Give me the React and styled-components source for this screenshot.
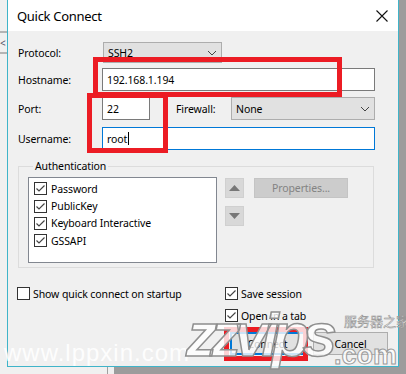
import React from "react";
import styled, { createGlobalStyle } from "styled-components";

const Global = createGlobalStyle`
  html, body { margin: 0; padding: 0; }
  body { width: 406px; height: 374px; overflow: hidden; background: #f0f0f0;
    font-family: "Noto Sans", "Open Sans", sans-serif; }
`;

const Desktop = styled.div`
  position: relative;
  width: 406px;
  height: 374px;
  overflow: hidden;
  background: #f0f0f0;
  display: flex;
  align-items: flex-start;
  padding-left: 7px;
  box-sizing: border-box;
`;

const BackWindow = styled.div`
  position: absolute;
  left: 107px;
  top: 0;
  width: 299px;
  height: 374px;
  border-left: 1px solid #a0a0a0;
  background: #f0f0f0;
  &::after {
    content: "";
    position: absolute;
    left: 6px;
    right: 0;
    top: 0;
    bottom: 0;
    background: #9c9c9c;
  }
`;

const BackLine = styled.div`
  position: absolute;
  left: 0;
  width: 7px;
  height: 2px;
  top: ${(p) => p.top}px;
  background: #b4b4b4;
`;

const BackGlyph = styled.div`
  position: absolute;
  left: 0;
  top: 36px;
  font: 10px "Noto Sans", sans-serif;
  color: #556;
`;

const Dialog = styled.div`
  position: relative;
  z-index: 1;
  margin-top: -1px;
  width: 392px;
  height: 368px;
  box-sizing: border-box;
  border: 1px solid #3fb4c9;
  background: #f0f0f0;
  display: flex;
  flex-direction: column;
  color: #000;
  font-size: 10.5px;
  letter-spacing: -0.1px;
`;

const TitleBar = styled.div`
  height: 31px;
  flex: none;
  background: #fff;
  display: flex;
  align-items: center;
  justify-content: space-between;
  padding: 0 9px 0 9px;
  box-sizing: border-box;
`;

const Title = styled.div`
  font-size: 13px;
  letter-spacing: -0.3px;
`;

const CloseBtn = styled.svg`
  width: 12px;
  height: 12px;
  margin-right: 1px;
`;

const Body = styled.div`
  flex: 1;
  padding: 11px 22px 0 10px;
  display: flex;
  flex-direction: column;
`;

const Row = styled.div`
  display: flex;
  align-items: center;
  height: ${(p) => p.h}px;
  margin-top: ${(p) => p.mt || 0}px;
`;

const Label = styled.div`
  width: ${(p) => p.w}px;
  flex: none;
  margin-left: ${(p) => p.ml || 0}px;
`;

const Select = styled.div`
  width: ${(p) => p.w}px;
  height: 100%;
  box-sizing: border-box;
  border: 1px solid #adadad;
  background: #e1e1e1;
  display: flex;
  align-items: center;
  justify-content: space-between;
  padding: 0 4px 0 4px;
  margin-left: ${(p) => p.ml || 0}px;
`;

const Chevron = () => (
  <svg width="10" height="6" viewBox="0 0 10 6">
    <path d="M1 1 L5 5 L9 1" fill="none" stroke="#444" strokeWidth="1" />
  </svg>
);

const Input = styled.div`
  width: ${(p) => p.w}px;
  height: 100%;
  box-sizing: border-box;
  border: 1px solid ${(p) => (p.focus ? "#0078d7" : "#7a7a7a")};
  background: #fff;
  display: flex;
  align-items: center;
  padding-left: 4px;
`;

const Caret = styled.span`
  display: inline-block;
  width: 1px;
  height: 13px;
  background: #000;
  margin-left: 1px;
`;

const Group = styled.fieldset`
  margin: 9px 0 0 0;
  padding: 4px 0 0 9px;
  width: 356px;
  height: 109px;
  box-sizing: border-box;
  border: 1px solid #dcdcdc;
  display: flex;
  align-items: flex-start;
`;

const Legend = styled.legend`
  padding: 0 2px;
  margin-left: 5px;
  line-height: 14px;
`;

const ListBox = styled.div`
  width: 189px;
  height: 86px;
  box-sizing: border-box;
  border: 1px solid #828790;
  background: #fff;
  padding: 2px 0 0 5px;
  display: flex;
  flex-direction: column;
`;

const ListItem = styled.div`
  height: 17.4px;
  display: flex;
  align-items: center;
  gap: 4px;
`;

const Box = styled.span`
  width: 13px;
  height: 13px;
  flex: none;
  box-sizing: border-box;
  border: 1px solid #333;
  background: #fff;
  display: inline-flex;
`;

const Check = ({ on }) => (
  <Box>
    {on && (
      <svg width="11" height="11" viewBox="0 0 11 11">
        <path d="M1.5 5.5 L4 8 L9.5 2.5" fill="none" stroke="#444" strokeWidth="1.2" />
      </svg>
    )}
  </Box>
);

const ArrowCol = styled.div`
  display: flex;
  flex-direction: column;
  gap: 8px;
  margin-left: 8px;
  margin-top: 1px;
`;

const ArrowBtn = styled.div`
  width: 19px;
  height: 20px;
  box-sizing: border-box;
  background: #d8d8d8;
  border: 1px solid #d0d0d0;
  display: flex;
  align-items: center;
  justify-content: center;
`;

const PropBtn = styled.div`
  margin-left: 10px;
  margin-top: 1px;
  width: 94px;
  height: 20px;
  box-sizing: border-box;
  background: #cccccc;
  border: 1px solid #c4c4c4;
  color: #838383;
  display: flex;
  align-items: center;
  justify-content: center;
`;

const Bottom = styled.div`
  display: grid;
  grid-template-columns: 208px auto;
  margin-top: 19px;
  row-gap: 9px;
  margin-left: -1px;
`;

const CheckRow = styled.div`
  display: flex;
  align-items: center;
  gap: 3px;
  height: 13px;
  grid-column: ${(p) => p.col};
`;

const Buttons = styled.div`
  display: flex;
  gap: 8px;
  justify-content: flex-end;
  margin-top: 10px;
  margin-right: -12px;
`;

const Btn = styled.div`
  width: 75px;
  height: 23px;
  box-sizing: border-box;
  background: #e1e1e1;
  border: ${(p) => (p.primary ? "2px solid #0078d7" : "1px solid #adadad")};
  display: flex;
  align-items: center;
  justify-content: center;
`;

const RedBox = styled.div`
  position: absolute;
  z-index: 3;
  left: ${(p) => p.x}px;
  top: ${(p) => p.y}px;
  width: ${(p) => p.w}px;
  height: ${(p) => p.h}px;
  box-sizing: border-box;
  border: 5px solid #ec1c24;
  pointer-events: none;
`;

const WaterText = styled.div`
  position: absolute;
  z-index: 4;
  left: ${(p) => p.x}px;
  top: ${(p) => p.y}px;
  white-space: nowrap;
  font-family: ${(p) => p.ff || '"Liberation Sans", sans-serif'};
  font-size: ${(p) => p.fs}px;
  font-weight: ${(p) => p.fw || 400};
  font-style: ${(p) => p.fi || "normal"};
  letter-spacing: ${(p) => p.ls || 0}px;
  color: rgba(255, 255, 255, ${(p) => p.op || 0.85});
  -webkit-text-stroke: ${(p) => p.stroke || "0"};
  line-height: 1;
  pointer-events: none;
`;

export default function App() {
  return (
    <>
      <Global />
      <Desktop>
        <BackWindow />
        <BackLine top={31} />
        <BackLine top={52} />
        <BackGlyph>&lt;</BackGlyph>
        <Dialog>
          <TitleBar>
            <Title>Quick Connect</Title>
            <CloseBtn viewBox="0 0 12 12">
              <path d="M0.5 0.5 L11.5 11.5 M11.5 0.5 L0.5 11.5" stroke="#111" strokeWidth="1.1" />
            </CloseBtn>
          </TitleBar>
          <Body>
            <Row h={21}>
              <Label w={84}>Protocol:</Label>
              <Select w={119} ml={1}>
                <span>SSH2</span>
                <Chevron />
              </Select>
            </Row>
            <Row h={23} mt={5}>
              <Label w={84}>Hostname:</Label>
              <Input w={273}>192.168.1.194</Input>
            </Row>
            <Row h={23} mt={6}>
              <Label w={84}>Port:</Label>
              <Input w={48}>22</Input>
              <Label w={55} ml={26}>Firewall:</Label>
              <Select w={144}>
                <span>None</span>
                <Chevron />
              </Select>
            </Row>
            <Row h={23} mt={7}>
              <Label w={84}>Username:</Label>
              <Input w={273} focus>
                root<Caret />
              </Input>
            </Row>
            <Group>
              <Legend>Authentication</Legend>
              <ListBox>
                {["Password", "PublicKey", "Keyboard Interactive", "GSSAPI"].map((t) => (
                  <ListItem key={t}>
                    <Check on />
                    <span>{t}</span>
                  </ListItem>
                ))}
              </ListBox>
              <ArrowCol>
                <ArrowBtn>
                  <svg width="11" height="6" viewBox="0 0 11 6">
                    <path d="M0 6 L5.5 0 L11 6 Z" fill="#777" />
                  </svg>
                </ArrowBtn>
                <ArrowBtn>
                  <svg width="11" height="6" viewBox="0 0 11 6">
                    <path d="M0 0 L5.5 6 L11 0 Z" fill="#777" />
                  </svg>
                </ArrowBtn>
              </ArrowCol>
              <PropBtn>Properties...</PropBtn>
            </Group>
            <Bottom>
              <CheckRow col="1">
                <Check />
                <span>Show quick connect on startup</span>
              </CheckRow>
              <CheckRow col="2">
                <Check on />
                <span>Save session</span>
              </CheckRow>
              <CheckRow col="2">
                <Check on />
                <span>Open in a tab</span>
              </CheckRow>
            </Bottom>
            <Buttons>
              <Btn primary>Connect</Btn>
              <Btn>Cancel</Btn>
            </Buttons>
          </Body>
        </Dialog>
        <RedBox x={93} y={57} w={249} h={40} />
        <RedBox x={87} y={93} w={81} h={60} />
        <RedBox x={224} y={327} w={84} h={34} />
        <WaterText x={4} y={341} fs={24} ls={1} op={0.9}>www.lppxin.com</WaterText>
        <WaterText x={186} y={304} fs={62} fw={900} fi="italic" ls={-7} op={0.8} stroke="1.5px #8f8f8f">zzvips</WaterText>
        <WaterText x={334} y={342} fs={27} fw={700} op={0.8} stroke="1px #9a9a9a">.com</WaterText>
        <WaterText x={344} y={314} fs={13} ff='"Noto Sans CJK SC", sans-serif' op={0.9} stroke="0.5px #8a8a8a">服务器之家</WaterText>
      </Desktop>
    </>
  );
}
